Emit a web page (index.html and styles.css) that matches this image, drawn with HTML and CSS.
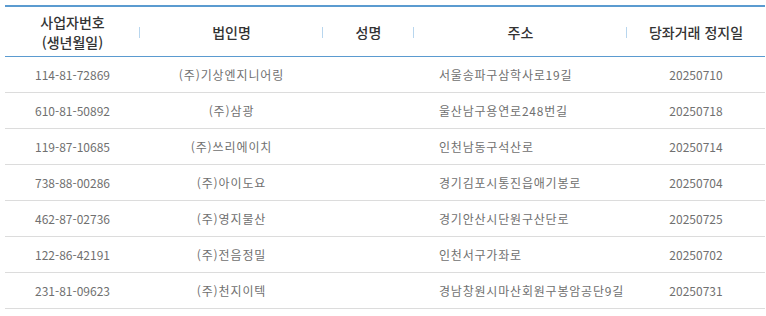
FILE: index.html
```html
<!DOCTYPE html>
<html lang="ko">
<head>
<meta charset="utf-8">
<link rel="stylesheet" href="styles.css">
</head>
<body>
<table class="list">
  <colgroup>
    <col class="c1"><col class="c2"><col class="c3"><col class="c4"><col class="c5">
  </colgroup>
  <thead>
    <tr>
      <th><span class="sep">사업자번호<br>(생년월일)</span></th>
      <th><span class="sep">법인명</span></th>
      <th><span class="sep">성명</span></th>
      <th><span class="sep">주소</span></th>
      <th><span>당좌거래 정지일</span></th>
    </tr>
  </thead>
  <tbody>
    <tr><td>114-81-72869</td><td class="ko">(주)기상엔지니어링</td><td></td><td class="addr">서울송파구삼학사로19길</td><td>20250710</td></tr>
    <tr><td>610-81-50892</td><td class="ko">(주)삼광</td><td></td><td class="addr">울산남구용연로248번길</td><td>20250718</td></tr>
    <tr><td>119-87-10685</td><td class="ko">(주)쓰리에이치</td><td></td><td class="addr">인천남동구석산로</td><td>20250714</td></tr>
    <tr><td>738-88-00286</td><td class="ko">(주)아이도요</td><td></td><td class="addr">경기김포시통진읍애기봉로</td><td>20250704</td></tr>
    <tr><td>462-87-02736</td><td class="ko">(주)영지물산</td><td></td><td class="addr">경기안산시단원구산단로</td><td>20250725</td></tr>
    <tr><td>122-86-42191</td><td class="ko">(주)전음정밀</td><td></td><td class="addr">인천서구가좌로</td><td>20250702</td></tr>
    <tr><td>231-81-09623</td><td class="ko">(주)천지이텍</td><td></td><td class="addr">경남창원시마산회원구봉암공단9길</td><td>20250731</td></tr>
  </tbody>
</table>
</body>
</html>
```
FILE: styles.css
```css
html, body {
  margin: 0;
  padding: 0;
  background: #fff;
}
body {
  padding: 5px 1px 0 5px;
  font-family: "Noto Sans CJK KR", "Noto Sans", sans-serif;
}
.list {
  width: 760px;
  border-collapse: collapse;
  table-layout: fixed;
  border-top: 2px solid #5b9bd0;
}
.c1 { width: 135px; }
.c2 { width: 183px; }
.c3 { width: 91px; }
.c4 { width: 213px; }
.c5 { width: 138px; }
.list th {
  height: 49px;
  padding: 0;
  font-size: 14px;
  font-weight: 500;
  line-height: 20px;
  color: #333;
  text-align: center;
  border-bottom: 1px solid #5b9bd0;
  position: relative;
}
.list th .sep::after {
  content: "";
  position: absolute;
  right: 0;
  top: 20px;
  width: 1px;
  height: 11px;
  background: #b8d6ee;
}
.list td {
  height: 35px;
  padding: 0;
  font-size: 12px;
  line-height: 16px;
  color: #707070;
  text-align: center;
  border-bottom: 1px solid #dcdcdc;
  white-space: nowrap;
}
.list td.ko {
  letter-spacing: 0.9px;
}
.list td.addr {
  text-align: left;
  padding-left: 25px;
  letter-spacing: 0.8px;
}
```
